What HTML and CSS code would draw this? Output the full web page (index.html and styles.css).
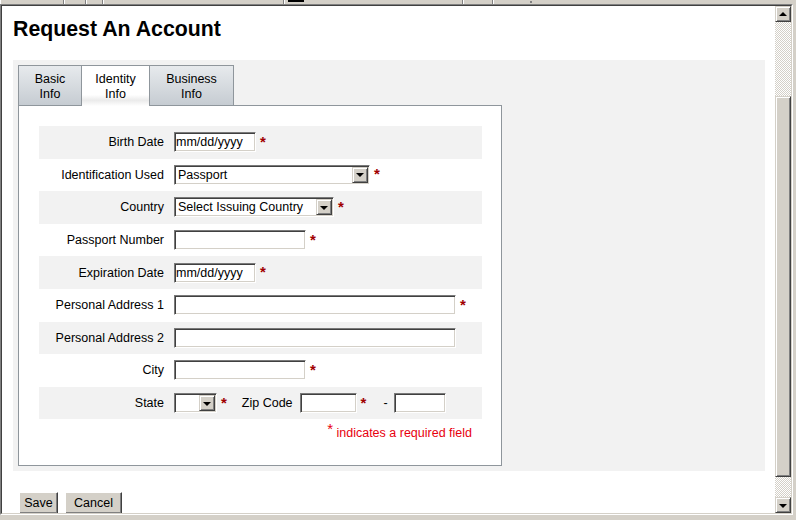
FILE: index.html
```html
<!DOCTYPE html>
<html lang="en">
<head>
<meta charset="utf-8">
<title>Request An Account</title>
<link rel="stylesheet" href="styles.css">
</head>
<body>
<div class="topbar">
  <span class="seg seg1"></span>
  <span class="seg seg2"></span>
  <span class="seg seg3"></span>
  <span class="seg seg4"></span>
  <span class="seg seg5"><span class="seg-mark"></span></span>
  <span class="seg seg6"></span>
  <span class="seg seg7"><span class="seg-tick"></span></span>
</div>
<div class="frame">
  <div class="frame-inner">
    <div class="viewport">
      <h1 class="title">Request An Account</h1>
      <div class="panel">
        <div class="tabs">
          <div class="tab tab-basic">Basic<br>Info</div>
          <div class="tab tab-identity active">Identity<br>Info</div>
          <div class="tab tab-business">Business<br>Info</div>
        </div>
        <div class="tab-body">
          <div class="form">
            <div class="row shaded">
              <label class="lbl">Birth Date</label>
              <div class="ctl"><input class="txt w-date" type="text" value="mm/dd/yyyy"><span class="req">*</span></div>
            </div>
            <div class="row">
              <label class="lbl">Identification Used</label>
              <div class="ctl"><span class="sel w-ident"><select><option>Passport</option></select><span class="sel-btn"><span class="tri-down"></span></span></span><span class="req">*</span></div>
            </div>
            <div class="row shaded">
              <label class="lbl">Country</label>
              <div class="ctl"><span class="sel w-country"><select><option>Select Issuing Country</option></select><span class="sel-btn"><span class="tri-down"></span></span></span><span class="req">*</span></div>
            </div>
            <div class="row">
              <label class="lbl">Passport Number</label>
              <div class="ctl"><input class="txt w-mid" type="text"><span class="req">*</span></div>
            </div>
            <div class="row shaded">
              <label class="lbl">Expiration Date</label>
              <div class="ctl"><input class="txt w-date" type="text" value="mm/dd/yyyy"><span class="req">*</span></div>
            </div>
            <div class="row">
              <label class="lbl">Personal Address 1</label>
              <div class="ctl"><input class="txt w-long" type="text"><span class="req">*</span></div>
            </div>
            <div class="row shaded">
              <label class="lbl">Personal Address 2</label>
              <div class="ctl"><input class="txt w-long" type="text"></div>
            </div>
            <div class="row">
              <label class="lbl">City</label>
              <div class="ctl"><input class="txt w-mid" type="text"><span class="req">*</span></div>
            </div>
            <div class="row shaded">
              <label class="lbl">State</label>
              <div class="ctl">
                <span class="sel w-state"><select><option></option></select><span class="sel-btn"><span class="tri-down"></span></span></span><span class="req">*</span>
                <span class="inline-lbl">Zip Code</span>
                <input class="txt w-zip zip-first" type="text"><span class="req">*</span>
                <span class="dash">-</span>
                <input class="txt w-zip4 zip-second" type="text">
              </div>
            </div>
          </div>
          <div class="note"><span class="note-star">*</span> indicates a required field</div>
        </div>
      </div>
      <div class="actions">
        <button class="btn btn-save" type="button">Save</button>
        <button class="btn btn-cancel" type="button">Cancel</button>
      </div>
    </div>
    <div class="scrollbar">
      <div class="sb-btn"><span class="tri-up"></span></div>
      <div class="sb-track sb-track-top"></div>
      <div class="sb-thumb"></div>
      <div class="sb-track sb-track-bottom"></div>
      <div class="sb-btn"><span class="tri-down"></span></div>
    </div>
  </div>
</div>
</body>
</html>
```
FILE: styles.css
```css
* { box-sizing: border-box; }

html, body {
  margin: 0;
  padding: 0;
}

body {
  width: 796px;
  height: 520px;
  overflow: hidden;
  background: #d4d0c8;
  font-family: "Liberation Sans", Arial, sans-serif;
  font-size: 12.5px;
  color: #000;
}

/* ---- top strip ---- */
.topbar {
  display: flex;
  height: 4px;
}
.seg {
  display: flex;
  height: 4px;
  border-right: 1px solid #808080;
  box-shadow: inset 1px 0 #fff;
}
.seg1 { width: 64px; }
.seg2 { width: 22px; }
.seg3 { width: 17px; }
.seg4 { width: 181px; }
.seg5 { width: 179px; }
.seg6 { width: 30px; }
.seg7 { flex: 1; border-right: none; }
.seg-mark {
  width: 16px;
  height: 2px;
  margin-left: 4px;
  background: #000;
}
.seg-tick {
  width: 2px;
  height: 2px;
  margin: 1px 0 0 37px;
  background: #808080;
}

/* ---- window frame ---- */
.frame {
  width: 793px;
  height: 511px;
  border: 1px solid;
  border-color: #808080 #fff #fff #808080;
}
.frame-inner {
  display: flex;
  height: 100%;
  border: 1px solid;
  border-color: #404040 #d4d0c8 #d4d0c8 #404040;
}
.viewport {
  width: 773px;
  height: 507px;
  overflow: hidden;
  background: #fff;
  padding: 11px 11px 0 11px;
}

/* ---- page ---- */
.title {
  margin: 0 0 19px 0;
  font-size: 21.3px;
  line-height: 24px;
  font-weight: bold;
}

.panel {
  width: 752px;
  height: 411px;
  padding: 5px;
  background: #f2f2f2;
}

.tabs {
  display: flex;
  align-items: flex-start;
  height: 40px;
}
.tab {
  height: 40px;
  margin-right: -1px;
  padding-top: 6px;
  border: 1px solid #8f969c;
  border-bottom: none;
  text-align: center;
  line-height: 15px;
  background: linear-gradient(#e7eaed, #c6ccd2);
}
.tab-basic { width: 64px; }
.tab-identity { width: 69px; }
.tab-business { width: 85px; }
.tab.active {
  position: relative;
  z-index: 1;
  height: 41px;
  margin-bottom: -1px;
  background: linear-gradient(#fff 0%, #fff 72%, #ebebeb 86%, #fff 100%);
}

.tab-body {
  width: 484px;
  height: 361px;
  padding: 20px 19px 0 20px;
  border: 1px solid #8f969c;
  background: #fff;
}

.form {
  width: 443px;
}
.row {
  display: flex;
  align-items: center;
  height: 32.6px;
}
.row.shaded {
  background: #f2f2f2;
}
.lbl {
  width: 130px;
  padding-right: 5px;
  text-align: right;
}
.ctl {
  display: flex;
  align-items: center;
  padding-left: 5px;
}

.txt {
  height: 20px;
  margin: 0;
  padding: 0 1px;
  border: 1px solid;
  border-color: #7a7a7a #fff #fff #7a7a7a;
  box-shadow: inset 1px 1px #404040, inset -1px -1px #d4d0c8;
  background: #fff;
  font-family: "Liberation Sans", Arial, sans-serif;
  font-size: 12.5px;
  color: #000;
  outline: none;
}
.w-date { width: 82px; }
.w-mid { width: 132px; }
.w-long { width: 282px; }
.w-zip { width: 57px; }
.w-zip4 { width: 52px; }

.sel {
  display: flex;
  align-items: center;
  height: 20px;
  padding: 1px;
  border: 1px solid;
  border-color: #7a7a7a #fff #fff #7a7a7a;
  box-shadow: inset 1px 1px #404040, inset -1px -1px #d4d0c8;
  background: #fff;
}
.sel select {
  flex: 1;
  min-width: 0;
  height: 16px;
  margin: 0;
  padding: 0 0 0 2px;
  border: none;
  background: transparent;
  -webkit-appearance: none;
  appearance: none;
  font-family: "Liberation Sans", Arial, sans-serif;
  font-size: 12.5px;
  color: #000;
  outline: none;
}
.w-ident { width: 196px; }
.w-country { width: 160px; }
.w-state { width: 43px; }

.sel-btn,
.sb-btn {
  display: flex;
  align-items: center;
  justify-content: center;
  flex: none;
  width: 16px;
  height: 16px;
  border: 1px solid;
  border-color: #d4d0c8 #404040 #404040 #d4d0c8;
  box-shadow: inset 1px 1px #fff, inset -1px -1px #808080;
  background: #d4d0c8;
}
.tri-down {
  width: 0;
  height: 0;
  border-left: 4px solid transparent;
  border-right: 4px solid transparent;
  border-top: 4px solid #000;
  margin-top: 1px;
}
.tri-up {
  width: 0;
  height: 0;
  border-left: 4px solid transparent;
  border-right: 4px solid transparent;
  border-bottom: 4px solid #000;
  margin-top: -1px;
}

.req {
  margin-left: 4px;
  margin-bottom: 2px;
  color: #a00000;
  font-size: 15px;
  font-weight: bold;
  line-height: 1;
  align-self: center;
}
.inline-lbl {
  margin-left: 15px;
}
.zip-first { margin-left: 7px; }
.dash { margin-left: 17px; }
.zip-second { margin-left: 6px; }

.note {
  width: 443px;
  height: 28px;
  padding-right: 10px;
  line-height: 28px;
  text-align: right;
  color: #e8000e;
}
.note-star {
  font-size: 15px;
  line-height: 1;
  vertical-align: 3px;
}

/* ---- buttons ---- */
.actions {
  display: flex;
  margin-top: 21px;
  padding-left: 6px;
}
.btn {
  height: 22px;
  margin: 0 7px 0 0;
  padding: 0;
  border: 1px solid;
  border-color: #fff #404040 #404040 #fff;
  box-shadow: inset -1px -1px #808080;
  background: #d4d0c8;
  font-family: "Liberation Sans", Arial, sans-serif;
  font-size: 12.5px;
  color: #000;
  text-align: center;
}
.btn-save { width: 39px; }
.btn-cancel { width: 57px; }

/* ---- scrollbar ---- */
.scrollbar {
  display: flex;
  flex-direction: column;
  width: 16px;
  height: 507px;
}
.sb-track {
  background: repeating-conic-gradient(#d4d0c8 0 25%, #fff 0 50%) 0 0 / 2px 2px;
}
.sb-track-top { height: 74px; }
.sb-track-bottom { height: 20px; }
.sb-thumb {
  height: 381px;
  border: 1px solid;
  border-color: #d4d0c8 #404040 #404040 #d4d0c8;
  box-shadow: inset 1px 1px #fff, inset -1px -1px #808080;
  background: #d4d0c8;
}
```
